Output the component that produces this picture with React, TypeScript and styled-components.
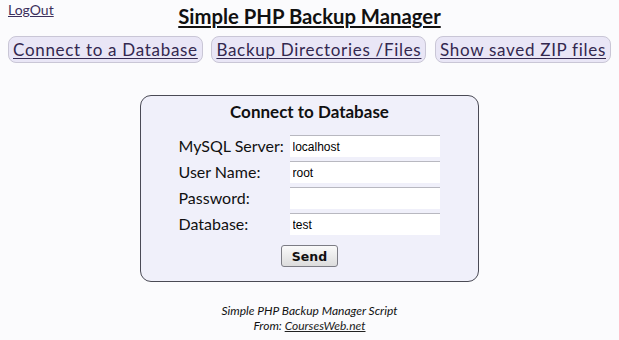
import { Fragment } from 'react';
import styled, { createGlobalStyle } from 'styled-components';

const GlobalStyle = createGlobalStyle`
  html, body {
    margin: 0;
    padding: 0;
    background: #fbfbfd;
  }
  body {
    font-family: Lato, "Open Sans", sans-serif;
    color: #111;
  }
`;

const Page = styled.div`
  width: 619px;
  height: 340px;
  padding: 1px 8px 0;
  box-sizing: border-box;
  position: relative;
`;

const LogOut = styled.a`
  position: absolute;
  left: 8px;
  top: 1px;
  font-size: 14px;
  color: #3b2f5c;
  text-decoration: underline;
`;

const Title = styled.h1`
  margin: 2px 0 0;
  text-align: center;
  font-size: 20.3px;
  font-weight: 700;
  text-decoration: underline;
  line-height: 26px;
`;

const Nav = styled.nav`
  display: flex;
  justify-content: space-between;
  margin-top: 7px;
`;

const NavButton = styled.a`
  display: inline-flex;
  align-items: center;
  height: 27px;
  padding: 0 4px;
  box-sizing: border-box;
  background: #e9e6f6;
  border: 1px solid #c9c6d6;
  border-radius: 8px;
  color: #33284f;
  font-size: 17px;
  letter-spacing: 0.7px;
  text-decoration: underline;
  text-decoration-thickness: 1px;
  text-underline-offset: 2px;
`;

const Box = styled.form`
  width: 339px;
  margin: 32px auto 0;
  box-sizing: border-box;
  background: #f0f0fa;
  border: 1px solid #4a4a55;
  border-radius: 11px;
  padding: 5px 0 14px;
  display: flex;
  flex-direction: column;
  align-items: center;
`;

const BoxTitle = styled.h2`
  margin: 0;
  font-size: 17px;
  font-weight: 700;
  line-height: 22px;
`;

const Fields = styled.div`
  display: grid;
  grid-template-columns: 111px 150px;
  row-gap: 4px;
  margin-top: 12px;
  margin-left: -1px;
  align-items: center;
`;

const Label = styled.label`
  font-size: 16px;
  line-height: 22px;
`;

const Input = styled.input`
  height: 22px;
  box-sizing: border-box;
  border: none;
  border-top: 1px solid #b8b8c0;
  background: #fff;
  font-family: "Liberation Sans", Arial, sans-serif;
  font-size: 12px;
  padding: 0 3px;
  outline: none;
  width: 150px;
`;

const Send = styled.button`
  margin-top: 10px;
  width: 57px;
  height: 22px;
  border: 1px solid #7c7c84;
  border-radius: 3px;
  background: linear-gradient(#fafafa, #dcdcdc);
  font-family: "DejaVu Sans", Verdana, sans-serif;
  font-weight: 700;
  font-size: 12.5px;
  color: #111;
  padding: 0;
`;

const Footer = styled.footer`
  margin-top: 21px;
  text-align: center;
  font-style: italic;
  font-size: 12px;
  line-height: 15px;
  a {
    color: #222;
    text-decoration: underline;
  }
`;

const fields = [
  { label: 'MySQL Server:', value: 'localhost' },
  { label: 'User Name:', value: 'root' },
  { label: 'Password:', value: '', type: 'password' },
  { label: 'Database:', value: 'test' },
];

export default function App() {
  return (
    <>
      <GlobalStyle />
      <Page>
        <LogOut href="#">LogOut</LogOut>
        <Title>Simple PHP Backup Manager</Title>
        <Nav>
          <NavButton href="#">Connect to a Database</NavButton>
          <NavButton href="#">Backup Directories /Files</NavButton>
          <NavButton href="#">Show saved ZIP files</NavButton>
        </Nav>
        <Box onSubmit={e => e.preventDefault()}>
          <BoxTitle>Connect to Database</BoxTitle>
          <Fields>
            {fields.map(f => (
              <Fragment key={f.label}>
                <Label>{f.label}</Label>
                <Input type={f.type || 'text'} defaultValue={f.value} />
              </Fragment>
            ))}
          </Fields>
          <Send type="submit">Send</Send>
        </Box>
        <Footer>
          Simple PHP Backup Manager Script<br />
          From: <a href="#">CoursesWeb.net</a>
        </Footer>
      </Page>
    </>
  );
}
